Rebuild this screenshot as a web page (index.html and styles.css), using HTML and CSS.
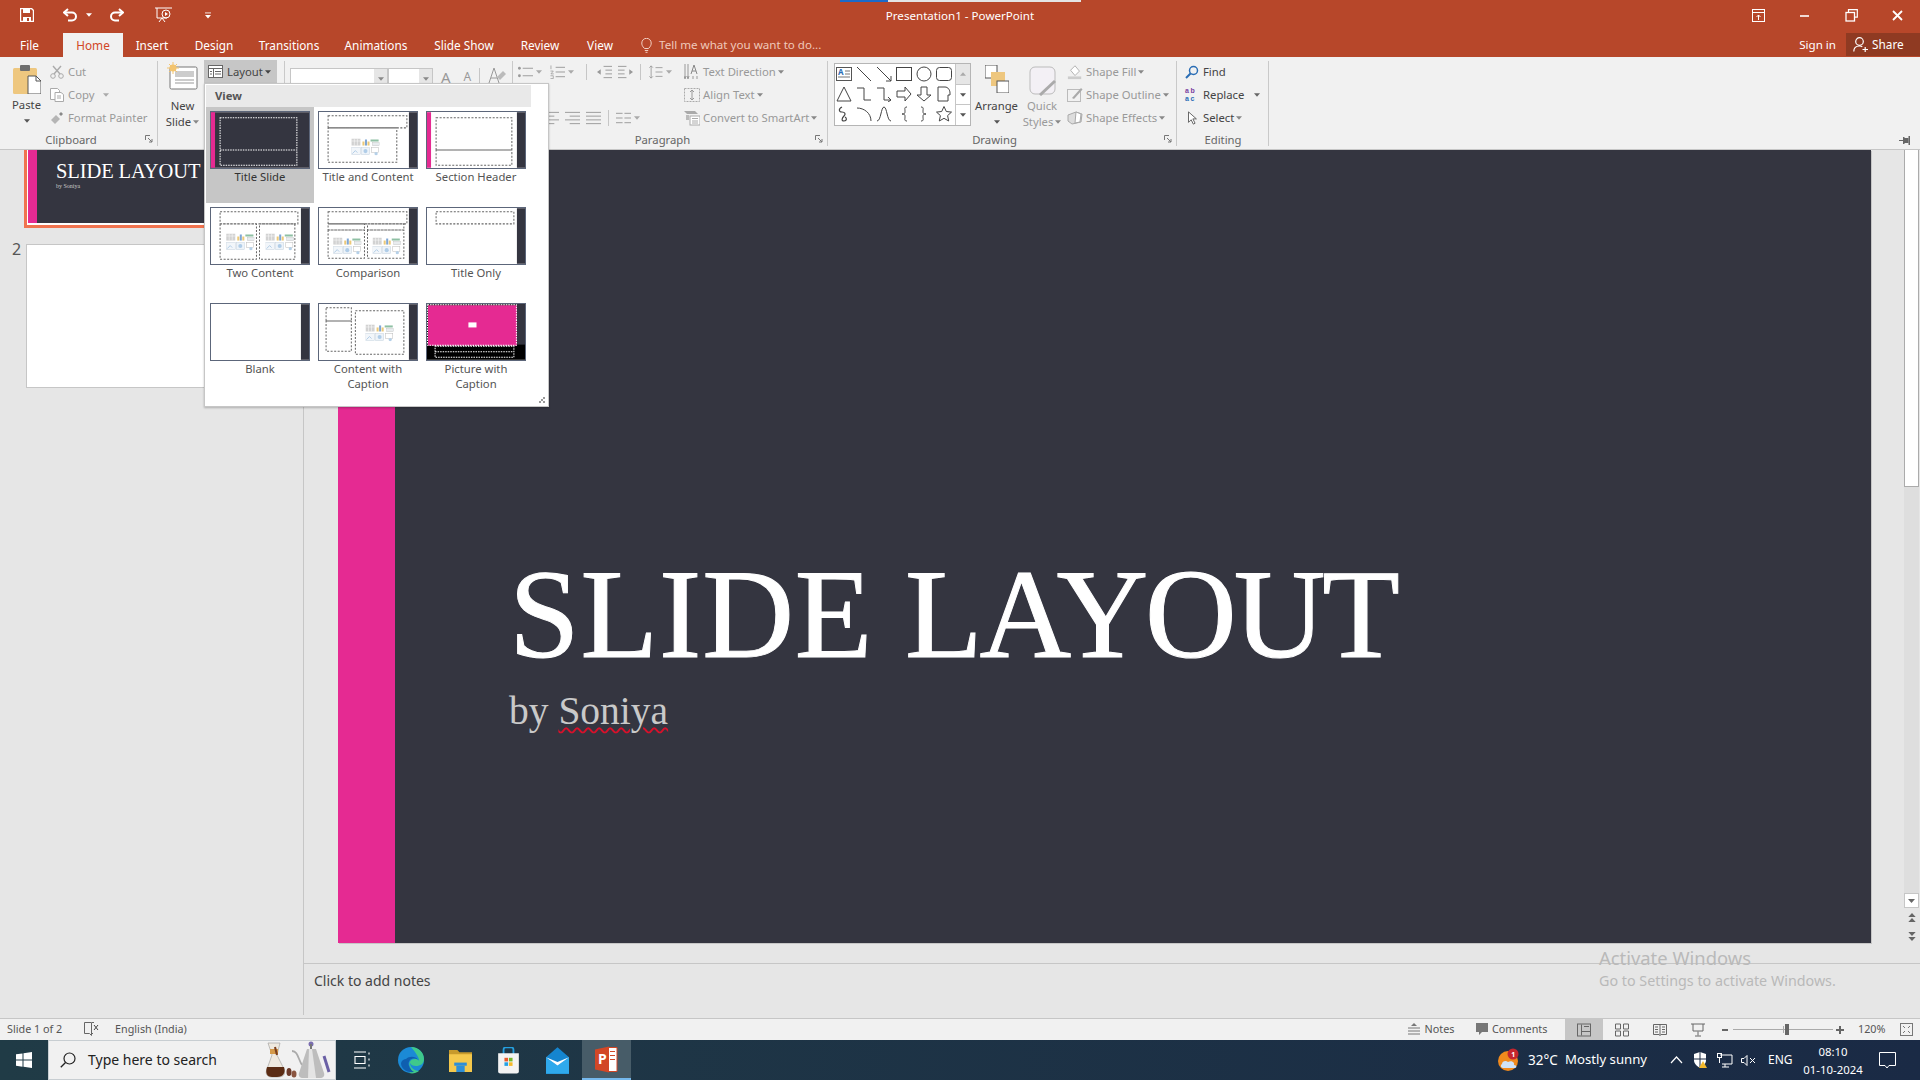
FILE: index.html
```html
<!DOCTYPE html>
<html lang="en">
<head>
<meta charset="utf-8">
<title>Presentation1 - PowerPoint</title>
<link rel="stylesheet" href="styles.css">
</head>
<body>
<svg class="sprite" xmlns="http://www.w3.org/2000/svg">
  <symbol id="ci" viewBox="0 0 28 17">
    <rect x="0" y="0" width="9" height="7" fill="#d2d2d2"/><path d="M0 2.500h9M3 0v7M6 0v7" stroke="#fff" stroke-width=".5"/>
    <rect x="11" y="3" width="2" height="4" fill="#ecc978"/><rect x="13.500" y="1" width="2" height="6" fill="#7fa6d4"/><rect x="16" y="3" width="2" height="4" fill="#ecc978"/>
    <rect x="19" y="1" width="8" height="2" fill="#8fc0a4"/><rect x="21" y="4" width="7" height="3" fill="#e8ecef" stroke="#bbb" stroke-width=".4"/>
    <rect x="0" y="9" width="9" height="7" fill="#f2f6fa" stroke="#c5d2de" stroke-width=".5"/><path d="M1 15l3-3 2 2" stroke="#a3c3e2" fill="none" stroke-width=".8"/>
    <rect x="10" y="9" width="8" height="7" fill="#edf3f9" stroke="#c5d2de" stroke-width=".5"/><circle cx="14" cy="12.500" r="2" fill="#b0cde8"/>
    <rect x="20" y="9" width="7" height="5" fill="#fff" stroke="#bbb" stroke-width=".5"/><circle cx="24.500" cy="15" r="1.600" fill="#b5d0e8"/>
  </symbol>
  <symbol id="caret" viewBox="0 0 7 4"><path d="M0 0h7L3.500 4z" fill="currentColor"/></symbol>
  <symbol id="launch" viewBox="0 0 8 8"><path d="M.5 5V.5H5M3 3l4 4M7 4v3H4" fill="none" stroke="#777"/></symbol>
  <symbol id="lines" viewBox="0 0 16 14"><path d="M0 1h16M0 5h11M0 9h16M0 13h11" stroke="currentColor" fill="none"/></symbol>
  <symbol id="linesr" viewBox="0 0 16 14"><path d="M0 1h16M5 5h11M0 9h16M5 13h11" stroke="currentColor" fill="none"/></symbol>
  <symbol id="linesj" viewBox="0 0 16 14"><path d="M0 1h16M0 5h16M0 9h16M0 13h16" stroke="currentColor" fill="none"/></symbol>
</svg>

<div class="titlebar">
  <div class="progress"><span class="progress-blue"></span><span class="progress-rest"></span></div>
  <div class="qat-row">
    <div class="qat">
      <svg class="q-save" viewBox="0 0 14 14"><path d="M.5.500h11l2 2v11H.5z" fill="none" stroke="#fff" stroke-width="1.400"/><path d="M3 1h7v4H3zM3 9h8v4H3z" fill="#fff"/><rect x="7" y="10" width="2" height="3" fill="#b7472a"/></svg>
      <svg class="q-undo" viewBox="0 0 15 14"><path d="M5 1L1 4.500 5 8" fill="none" stroke="#fff" stroke-width="2"/><path d="M2 4.500h7a4 4 0 0 1 0 8H5" fill="none" stroke="#fff" stroke-width="2"/></svg>
      <svg class="q-caret"><use href="#caret"/></svg>
      <svg class="q-redo" viewBox="0 0 15 14"><path d="M10 1l4 3.500L10 8" fill="none" stroke="#fff" stroke-width="2"/><path d="M13 4.500H6a4 4 0 0 0 0 8h4" fill="none" stroke="#fff" stroke-width="2"/></svg>
      <svg class="q-show" viewBox="0 0 17 16"><path d="M0 1h17M2 1v10h10M4 15l3-4 3 4" fill="none" stroke="#fff"/><circle cx="11" cy="7" r="4" fill="none" stroke="#fff"/><path d="M10 5l3 2-3 2z" fill="#fff"/></svg>
      <svg class="q-more" viewBox="0 0 7 7"><path d="M0 .5h7" stroke="#fff"/><path d="M0 3h7L3.500 7z" fill="#fff"/></svg>
    </div>
    <div class="doc-title">Presentation1 - PowerPoint</div>
    <div class="win">
      <svg class="w-btn" viewBox="0 0 13 13"><rect x=".5" y=".5" width="12" height="12" fill="none" stroke="#fff"/><path d="M0 3.500h13M6.500 11V6M4.500 8l2-2 2 2" stroke="#fff" fill="none"/></svg>
      <svg class="w-btn" viewBox="0 0 13 13"><path d="M2 7h9" stroke="#fff" stroke-width="1.600"/></svg>
      <svg class="w-btn" viewBox="0 0 13 13"><path d="M3.500 3V.7h8.800v7.500H9.500" fill="none" stroke="#fff" stroke-width="1.200"/><rect x="1" y="3.500" width="8.500" height="8.500" fill="none" stroke="#fff" stroke-width="1.300"/></svg>
      <svg class="w-btn" viewBox="0 0 13 13"><path d="M2 2l9 9M11 2l-9 9" stroke="#fff" stroke-width="1.800"/></svg>
    </div>
  </div>
  <div class="tabs-row">
    <div class="tabs">
      <span class="tab">File</span><span class="tab tab-active">Home</span><span class="tab">Insert</span><span class="tab">Design</span><span class="tab">Transitions</span><span class="tab">Animations</span><span class="tab">Slide Show</span><span class="tab">Review</span><span class="tab">View</span>
    </div>
    <div class="tellme">
      <svg class="bulb" viewBox="0 0 11 15"><path d="M3.500 10.500C1 8 .8 6.500.8 5a4.700 4.700 0 0 1 9.400 0c0 1.500-.2 3-2.700 5.500zM3.800 12.500h3.400M4.500 14.300h2" fill="none" stroke="#f3d0c4"/></svg>
      <span>Tell me what you want to do...</span>
    </div>
    <div class="account">
      <span class="signin">Sign in</span>
      <span class="share"><svg class="share-ico" viewBox="0 0 15 15"><circle cx="6.500" cy="4.500" r="3.800" fill="none" stroke="#fff" stroke-width="1.200"/><path d="M.8 14.500c0-3.500 2.500-5.500 5.700-5.500 1 0 2 .2 2.800.7M9.500 12.500h5.500M12.200 10v5" fill="none" stroke="#fff" stroke-width="1.200"/></svg>Share</span>
    </div>
  </div>
</div>

<div class="ribbon">
  <section class="group g-clip">
    <div class="g-body">
      <div class="big b-paste">
        <svg class="i-paste" viewBox="0 0 28 29"><rect x="0" y="3" width="24" height="26" rx="1.500" fill="#eec77f"/><rect x="7" y="0" width="10" height="6" rx="1" fill="#6f6f6f"/><path d="M15 11h8l5 5v13H15z" fill="#fff" stroke="#555"/><path d="M23 11v5h5" fill="none" stroke="#555"/></svg>
        <span class="lbl dark">Paste</span>
        <svg class="caret dark"><use href="#caret"/></svg>
      </div>
      <div class="stack">
        <div class="row dis"><svg class="i14" viewBox="0 0 14 14"><path d="M3 1l7 8M11 1L4 9" stroke="#aaa" stroke-width="1.400"/><circle cx="3" cy="11" r="2.300" fill="none" stroke="#aaa"/><circle cx="11" cy="11" r="2.300" fill="none" stroke="#aaa"/></svg><span>Cut</span></div>
        <div class="row dis"><svg class="i14" viewBox="0 0 14 14"><path d="M.5.500h7l2 2v9H.5z" fill="#fff" stroke="#aaa"/><path d="M5 4.500h6l2.500 2v7H5z" fill="#fff" stroke="#aaa"/><path d="M7 8h4M7 10h4" stroke="#aaa"/></svg><span>Copy</span><svg class="caret gap"><use href="#caret"/></svg></div>
        <div class="row dis"><svg class="i14" viewBox="0 0 14 14"><path d="M1 9l5-5 4 4-5 5z" fill="#b5b5b5"/><path d="M9 3l2-2 2 2-2 2z" fill="#888"/></svg><span>Format Painter</span></div>
      </div>
    </div>
    <div class="g-label lbl-shift">Clipboard<svg class="launch"><use href="#launch"/></svg></div>
  </section>

  <section class="group g-slides">
    <div class="g-body">
      <div class="big b-new">
        <svg class="i-new" viewBox="0 0 31 28"><rect x="3" y="5" width="27" height="22" rx="1.500" fill="#fff" stroke="#777"/><rect x="8" y="9" width="19" height="6" fill="#ccc"/><path d="M8 18h19M8 21h19" stroke="#999"/><circle cx="6" cy="6" r="3.500" fill="#f3c46f"/><path d="M6 0v12M0 6h12M2 2l8 8M10 2l-8 8" stroke="#f3c46f"/></svg>
        <span class="lbl dark">New</span>
        <span class="lbl dark">Slide<svg class="caret inline"><use href="#caret"/></svg></span>
      </div>
      <div class="layout-btn">
        <svg class="i-layout" viewBox="0 0 15 13"><rect x=".5" y=".5" width="14" height="12" fill="#fff" stroke="#666"/><path d="M1 3.500h13M5.500 4v8M7 6.500h6M7 9h6M2 6.500h2M2 9h2" stroke="#666" fill="none"/></svg>
        <span>Layout</span><svg class="caret inline"><use href="#caret"/></svg>
      </div>
    </div>
    <div class="g-label"></div>
  </section>

  <section class="group g-font">
    <div class="g-body font-row">
      <div class="combo c-font"><span class="combo-arrow"><svg class="caret"><use href="#caret"/></svg></span></div>
      <div class="combo c-size"><span class="combo-arrow"><svg class="caret"><use href="#caret"/></svg></span></div>
      <span class="big-a">A</span><span class="small-a">A</span><span class="vsep"></span>
      <svg class="i-clear" viewBox="0 0 18 16"><path d="M6 0L1 15M6 0l5 15M3 10h6" stroke="#999" fill="none"/><path d="M9 9l6-6 3 3-6 6z" fill="#bbb"/></svg>
    </div>
    <div class="g-label"></div>
  </section>

  <section class="group g-para">
    <div class="g-body">
      <div class="para-left">
        <div class="row para-row">
          <span class="pbtn w32"><svg class="i16" viewBox="0 0 16 14"><circle cx="1.500" cy="3" r="1.500" fill="#999"/><circle cx="1.500" cy="11" r="1.500" fill="#999"/><path d="M5 3h11M5 11h11" stroke="#999"/></svg><svg class="caret"><use href="#caret"/></svg></span>
          <span class="pbtn w32"><svg class="i16" viewBox="0 0 16 14"><path d="M6 2h10M6 7h10M6 12h10" stroke="#999"/><path d="M1 0v4M.5 6h3L1 9h3M.5 11h3v3h-3" stroke="#999" fill="none" stroke-width=".8"/></svg><svg class="caret"><use href="#caret"/></svg></span>
          <span class="vsep"></span>
          <span class="pbtn w21"><svg class="i16" viewBox="0 0 16 14"><path d="M7 1h9M9 5h7M9 9h7M7 13h9" stroke="#999"/><path d="M0 7l4-3v6z" fill="#999"/></svg></span>
          <span class="pbtn w21"><svg class="i16" viewBox="0 0 16 14"><path d="M0 1h9M0 5h7M0 9h7M0 13h9" stroke="#999"/><path d="M12 4l4 3-4 3z" fill="#999"/></svg></span>
          <span class="vsep"></span>
          <span class="pbtn w32"><svg class="i16" viewBox="0 0 16 16"><path d="M3 1v14M1 3l2-2 2 2M1 13l2 2 2-2M8 3h8M8 8h8M8 13h8" stroke="#999" fill="none"/></svg><svg class="caret"><use href="#caret"/></svg></span>
        </div>
        <div class="row para-row"></div>
        <div class="row para-row r3">
          <span class="pbtn w21"><svg class="i16 c999"><use href="#lines"/></svg></span>
          <span class="pbtn w21"><svg class="i16 c999"><use href="#linesr"/></svg></span>
          <span class="pbtn w21"><svg class="i16 c999"><use href="#linesj"/></svg></span>
          <span class="vsep"></span>
          <span class="pbtn w32"><svg class="i16" viewBox="0 0 16 14"><path d="M0 2h7M9 2h7M0 7h7M9 7h7M0 12h7M9 12h7" stroke="#999"/></svg><svg class="caret"><use href="#caret"/></svg></span>
        </div>
      </div>
      <div class="stack">
        <div class="row dis"><svg class="i16" viewBox="0 0 16 16"><path d="M1 0v14M4 0v14M0 12l1 3 1-3M3 12l1 3 1-3" stroke="#999" fill="none"/><path d="M7 10l3-9 3 9M8 7h4" stroke="#888" fill="none"/><path d="M9 12v3M13 12v3" stroke="#999"/></svg><span>Text Direction</span><svg class="caret inline"><use href="#caret"/></svg></div>
        <div class="row dis"><svg class="i16" viewBox="0 0 16 16"><rect x=".5" y="1.500" width="15" height="13" fill="none" stroke="#aaa" stroke-dasharray="2 1"/><path d="M8 3v10M6 5l2-2 2 2M6 11l2 2 2-2" stroke="#999" fill="none"/></svg><span>Align Text</span><svg class="caret inline"><use href="#caret"/></svg></div>
        <div class="row dis"><svg class="i16" viewBox="0 0 16 16"><path d="M0 1h11l3 3H3z" fill="#aaa"/><rect x="6" y="6" width="10" height="9" fill="#fff" stroke="#aaa"/><path d="M8 8.500h6M8 11h6M8 13h6" stroke="#aaa"/><rect x="2" y="5" width="3" height="5" fill="#bbb"/></svg><span>Convert to SmartArt</span><svg class="caret inline"><use href="#caret"/></svg></div>
      </div>
    </div>
    <div class="g-label lbl-shift">Paragraph<svg class="launch"><use href="#launch"/></svg></div>
  </section>

  <section class="group g-draw">
    <div class="g-body">
      <div class="gallery">
        <div class="shapes">
          <svg class="sh" viewBox="0 0 16 16"><rect x=".5" y="1.500" width="15" height="13" fill="#fff" stroke="#555"/><path d="M9 5h5M9 8h5M2 11h12" stroke="#777"/><text x="2" y="9" class="sh-a">A</text></svg>
          <svg class="sh" viewBox="0 0 16 16"><path d="M1 1l14 14" stroke="#444"/></svg>
          <svg class="sh" viewBox="0 0 16 16"><path d="M1 1l14 14M15 10v5h-5" stroke="#444" fill="none"/></svg>
          <svg class="sh" viewBox="0 0 16 16"><rect x=".5" y="1.500" width="15" height="13" fill="none" stroke="#444"/></svg>
          <svg class="sh" viewBox="0 0 16 16"><circle cx="8" cy="8" r="7" fill="none" stroke="#444"/></svg>
          <svg class="sh" viewBox="0 0 16 16"><rect x=".5" y="1.500" width="15" height="13" rx="3" fill="none" stroke="#444"/></svg>
          <svg class="sh" viewBox="0 0 16 16"><path d="M8 1l7 14H1z" fill="none" stroke="#444"/></svg>
          <svg class="sh" viewBox="0 0 16 16"><path d="M1 2h7v12h7" fill="none" stroke="#444"/></svg>
          <svg class="sh" viewBox="0 0 16 16"><path d="M1 2h7v12h7M12 11l3 3-3 2" fill="none" stroke="#444"/></svg>
          <svg class="sh" viewBox="0 0 16 16"><path d="M1 5h8V1l6 7-6 7v-4H1z" fill="none" stroke="#444"/></svg>
          <svg class="sh" viewBox="0 0 16 16"><path d="M5 1h6v8h4l-7 6-7-6h4z" fill="none" stroke="#444"/></svg>
          <svg class="sh" viewBox="0 0 16 16"><path d="M2 1h7c3 0 5 3 5 6v2h-2v6H2z" fill="none" stroke="#444"/></svg>
          <svg class="sh" viewBox="0 0 16 16"><path d="M6 1C2 3 3 6 6 6s4 2 2 4-3 5 0 5 3-3 1-4" fill="none" stroke="#444" stroke-width="1.200"/></svg>
          <svg class="sh" viewBox="0 0 16 16"><path d="M1 2c7 0 14 5 14 13" fill="none" stroke="#444"/></svg>
          <svg class="sh" viewBox="0 0 16 16"><path d="M1 15C5 15 5 1 8 1s3 14 7 14" fill="none" stroke="#444"/></svg>
          <svg class="sh" viewBox="0 0 16 16"><path d="M11 1C8 1 9 3 9 5s0 3-3 3c3 0 3 1 3 3s-1 4 2 4" fill="none" stroke="#444"/></svg>
          <svg class="sh" viewBox="0 0 16 16"><path d="M5 1c3 0 2 2 2 4s0 3 3 3c-3 0-3 1-3 3s1 4-2 4" fill="none" stroke="#444"/></svg>
          <svg class="sh" viewBox="0 0 16 16"><path d="M8 .5l2.300 5 5.200.6-3.900 3.500 1.100 5.400L8 12.300 3.300 15l1.100-5.400L.5 6.100l5.200-.6z" fill="none" stroke="#444"/></svg>
        </div>
        <div class="g-scroll">
          <span class="gs gs-up"><svg class="caret up"><use href="#caret"/></svg></span>
          <span class="gs"><svg class="caret dark"><use href="#caret"/></svg></span>
          <span class="gs gs-more"><svg class="caret dark"><use href="#caret"/></svg></span>
        </div>
      </div>
      <div class="big b-arr">
        <svg class="i-arr" viewBox="0 0 24 28"><rect x="0" y="0" width="12" height="13" fill="#fff" stroke="#555"/><rect x="6" y="7" width="14" height="14" fill="#eec77f"/><rect x="12" y="16" width="12" height="12" fill="#fff" stroke="#555"/></svg>
        <span class="lbl dark">Arrange</span>
        <svg class="caret dark"><use href="#caret"/></svg>
      </div>
      <div class="big b-qs">
        <svg class="i-qs" viewBox="0 0 27 30"><rect x="1" y="1" width="25" height="27" rx="5" fill="#f3f0f5" stroke="#bbb"/><path d="M11 29l15-14" stroke="#aaa" stroke-width="3"/></svg>
        <span class="lbl dis-c">Quick</span>
        <span class="lbl dis-c">Styles<svg class="caret inline"><use href="#caret"/></svg></span>
      </div>
      <div class="stack">
        <div class="row dis"><svg class="i16" viewBox="0 0 16 18"><path d="M3 7l5-5 5 6-5 5z" fill="#fff" stroke="#aaa"/><rect x="0" y="14" width="15" height="3" fill="#ccc"/></svg><span>Shape Fill</span><svg class="caret inline"><use href="#caret"/></svg></div>
        <div class="row dis"><svg class="i16" viewBox="0 0 16 16"><rect x=".5" y="2.500" width="13" height="12" fill="none" stroke="#bbb"/><path d="M5 11L14 1l1.500 1.500L7 12z" fill="#aaa"/></svg><span>Shape Outline</span><svg class="caret inline"><use href="#caret"/></svg></div>
        <div class="row dis"><svg class="i16" viewBox="0 0 16 16"><path d="M1 5l8-3 6 2-1 8-9 2-4-3z" fill="#ddd" stroke="#aaa"/><path d="M9 2l5 2-1 8-5 1z" fill="#fff" stroke="#aaa"/></svg><span>Shape Effects</span><svg class="caret inline"><use href="#caret"/></svg></div>
      </div>
    </div>
    <div class="g-label lbl-shift">Drawing<svg class="launch"><use href="#launch"/></svg></div>
  </section>

  <section class="group g-edit">
    <div class="g-body">
      <div class="stack">
        <div class="row dk"><svg class="i14" viewBox="0 0 14 14"><circle cx="8.500" cy="5.500" r="4" fill="none" stroke="#2a6db5" stroke-width="1.500"/><path d="M5.500 8.500L1 13" stroke="#2a6db5" stroke-width="2"/></svg><span>Find</span></div>
        <div class="row dk"><span class="abac"><b class="ab">ab</b><b class="ac">ac</b></span><span>Replace</span><svg class="caret gap2"><use href="#caret"/></svg></div>
        <div class="row dk"><svg class="i14" viewBox="0 0 14 16"><path d="M3 1v12l3-3 2.500 5 2-1L8 9h4z" fill="#fff" stroke="#555"/></svg><span>Select</span><svg class="caret inline"><use href="#caret"/></svg></div>
      </div>
    </div>
    <div class="g-label">Editing</div>
  </section>

  <svg class="pin" viewBox="0 0 11 9"><path d="M0 4.500h4" stroke="#666"/><rect x="4" y="1" width="1.500" height="7" fill="#666"/><rect x="5" y="2" width="4.500" height="5" fill="#666"/><rect x="9.500" y="0" width="1.500" height="9" fill="#666"/></svg>
</div>

<main class="workspace">
  <aside class="panel">
    <div class="thumb-active">
      <div class="mini">
        <span class="mini-pink"></span>
        <div class="mini-text">
          <div class="mini-title">SLIDE LAYOUT</div>
          <div class="mini-sub">by Soniya</div>
        </div>
      </div>
    </div>
    <div class="thumb-row">
      <span class="thumb-num">2</span>
      <div class="thumb-blank"></div>
    </div>
  </aside>

  <div class="editor">
    <div class="stage">
      <article class="slide">
        <span class="slide-pink"></span>
        <div class="slide-text">
          <h1 class="slide-title"><span class="word-a">SLIDE</span> <span class="word-b">LAYOUT</span></h1>
          <p class="slide-sub">by <span class="spell">Soniya</span></p>
        </div>
      </article>
      <div class="vscroll">
        <span class="vs-thumb"></span>
        <span class="vs-track"></span>
        <span class="vs-down"><svg class="caret-lg"><use href="#caret"/></svg></span>
        <svg class="vs-prev" viewBox="0 0 9 11"><path d="M0 5h9L4.500 0zM0 11h9L4.500 6z" fill="#666"/></svg>
        <svg class="vs-next" viewBox="0 0 9 11"><path d="M0 0h9L4.500 5zM0 6h9L4.500 11z" fill="#666"/></svg>
      </div>
    </div>
    <div class="notes">Click to add notes</div>
  </div>
</main>

<div class="watermark">
  <div class="wm-1">Activate Windows</div>
  <div class="wm-2">Go to Settings to activate Windows.</div>
</div>

<footer class="status">
  <div class="st-left">
    <span class="st-slide">Slide 1 of 2</span>
    <svg class="st-spell" viewBox="0 0 15 15"><path d="M6 .5H.5v11h5l2 2v-13zM8 .5h2M8 11.500h1" fill="none" stroke="#666"/><path d="M10 3l4 5M14 3l-4 5" stroke="#444"/></svg>
    <span>English (India)</span>
  </div>
  <div class="st-right">
    <span class="st-notes"><svg class="i12" viewBox="0 0 12 12"><path d="M6 0l3 3H3z" fill="#777"/><path d="M0 5h12M0 8h12M0 11h12" stroke="#777"/></svg>Notes</span>
    <span class="st-comments"><svg class="i12" viewBox="0 0 12 12"><path d="M0 0h12v9H6l-3 3V9H0z" fill="#777"/></svg>Comments</span>
    <span class="vw vw-on"><svg class="i14" viewBox="0 0 14 13"><rect x=".5" y=".5" width="13" height="12" fill="none" stroke="#666"/><path d="M4.500 1v11M5 8h8M7 3h5" stroke="#666" fill="none"/></svg></span>
    <span class="vw"><svg class="i14" viewBox="0 0 14 13"><path d="M.5.500h5v5h-5zM8.500.500h5v5h-5zM.5 7.500h5v5h-5zM8.500 7.500h5v5h-5z" fill="none" stroke="#666"/></svg></span>
    <span class="vw"><svg class="i14" viewBox="0 0 14 13"><path d="M.5 1h13v10H8l-1 1-1-1H.500zM7 1v11M2 3.500h3M2 6h3M2 8.500h3M9 3.500h3M9 6h3M9 8.500h3" fill="none" stroke="#666"/></svg></span>
    <span class="vw"><svg class="i14" viewBox="0 0 14 13"><path d="M0 .5h14M2 .5v7h10v-7M7 8v4M4 12.500h6" fill="none" stroke="#666"/></svg></span>
    <span class="zoom-minus"></span>
    <span class="slider"><span class="slider-mid"></span><span class="slider-thumb"></span></span>
    <span class="zoom-plus"></span>
    <span class="zoom-val">120%</span>
    <svg class="st-fit" viewBox="0 0 13 13"><rect x=".5" y=".5" width="12" height="12" fill="none" stroke="#777"/><path d="M3 3l2 2M10 3L8 5M3 10l2-2M10 10L8 8" stroke="#777"/></svg>
  </div>
</footer>

<nav class="taskbar">
  <span class="tb-start"><svg class="win-logo" viewBox="0 0 16 16"><path d="M0 2.300l6.500-.9v6.200H0zM7.500 1.300L16 0v7.600H7.500zM0 8.500h6.500v6.200L0 13.800zM7.500 8.500H16V16l-8.500-1.200z" fill="#fff"/></svg></span>
  <div class="tb-search">
    <svg class="tb-mag" viewBox="0 0 16 16"><circle cx="9.500" cy="6.500" r="5.500" fill="none" stroke="#222" stroke-width="1.200"/><path d="M5.500 10.500L.8 15.300" stroke="#222" stroke-width="1.300"/></svg>
    <span class="tb-stext">Type here to search</span>
    <svg class="tb-coffee" viewBox="0 0 66 38"><path d="M3 2h12l-3 12 7 14c2 6-1 8-7 8H7c-5 0-7-3-5-8l5-14z" fill="#efe9df" stroke="#999" stroke-width=".6"/><path d="M2 26h17c2 6-1 10-7 10H7C2 36 0 32 2 26z" fill="#5b2c14"/><path d="M5 8h8v5H5z" fill="#d59a4a"/><path d="M10 6l2 8" stroke="#7b3f1d" stroke-width="2"/><ellipse cx="24" cy="31" rx="2.500" ry="4" fill="#6b3a2a"/><ellipse cx="29" cy="33" rx="2.500" ry="3.500" fill="#8a5540"/><path d="M27 10c6 0 6 8 10 14" fill="none" stroke="#aaa" stroke-width="1.800"/><path d="M42 8h9l8 24c1 3-1 5-4 5H38c-3 0-5-2-4-5z" fill="#bdbdbd"/><path d="M44 8h3l4 29h-8z" fill="#e4e4e4"/><circle cx="46" cy="3" r="2.500" fill="#7a6db0"/><path d="M46 3v5" stroke="#777" stroke-width="2"/><path d="M59 15l5 16" stroke="#6a60a5" stroke-width="3"/></svg>
  </div>
  <span class="tb-app tb-first"><svg class="tb-ico" viewBox="0 0 16 17"><path d="M0 .5h12M0 16.500h12M1 5h10v7H1zM15 1v2M15 7v2M15 13v2" fill="none" stroke="#fff" stroke-width="1.100"/></svg></span>
  <span class="tb-app"><svg class="tb-edge" viewBox="0 0 26 28"><circle cx="13" cy="14" r="13" fill="#1b8ad6"/><path d="M13 1c8 0 13 6 13 12 0 5-4 7-8 7-3 0-5-1-6-3 0 4 4 8 9 8-3 2-6 3-10 2 3-1 2-4 1-6-2-5 1-8 5-8 3 0 5 2 4 4 1-5-3-10-8-16z" fill="#3fc98b"/><path d="M8 13c3-3 10-3 12 1-2-2-6-2-8 0-3 3-1 9 4 12-7 1-13-3-13-9 1-3 3-4 5-4z" fill="#0f5fb0"/></svg></span>
  <span class="tb-app"><svg class="tb-ico-lg" viewBox="0 0 22 24"><path d="M0 2h8l2 2h12v4H0z" fill="#c79a2c"/><rect x="0" y="6" width="22" height="17" fill="#f4c84c"/><path d="M7 23v-6h8v6" fill="#2d8fd8"/><path d="M5 14h12v3H5z" fill="#2d8fd8"/></svg></span>
  <span class="tb-app"><svg class="tb-ico-lg" viewBox="0 0 23 30"><path d="M6 8V3c0-1.500 1-2.500 2.500-2.500h6C16 .5 17 1.500 17 3v5" fill="none" stroke="#25a0e0" stroke-width="2"/><path d="M0 7h23v20c0 1.500-1 2.500-2.500 2.500h-18C1 29.500 0 28.500 0 27z" fill="#f3f3f3"/><rect x="7" y="12" width="4" height="4" fill="#e85a2c"/><rect x="12" y="12" width="4" height="4" fill="#74b72a"/><rect x="7" y="17" width="4" height="4" fill="#24a2e6"/><rect x="12" y="17" width="4" height="4" fill="#f4b92a"/></svg></span>
  <span class="tb-app"><svg class="tb-ico-lg" viewBox="0 0 25 29"><path d="M0 11L12.500 0 25 11v18H0z" fill="#1585cf"/><path d="M0 11l12.500 9L25 11v18H0z" fill="#2fa9ec"/><path d="M0 11l12.500 9L25 11 12.500 16z" fill="#fff"/></svg></span>
  <span class="tb-app tb-active"><svg class="tb-ico-lg" viewBox="0 0 23 26"><path d="M13 1h9v24h-9z" fill="#fff" stroke="#d24726"/><path d="M15 5h5M15 9h5M15 13h5" stroke="#d24726"/><path d="M0 3l14-3v26L0 23z" fill="#d24726"/><text x="3" y="17" class="ppt-p">P</text></svg></span>
  <div class="tray">
    <svg class="t-weather" viewBox="0 0 24 24"><circle cx="11" cy="13" r="10" fill="#f08a1d"/><path d="M6 20c-2 0 -3-3-1-4 0-3 4-4 6-2 3-2 7 0 6 3 3 0 3 3 1 3z" fill="#cfe3f8"/><circle cx="16" cy="6" r="5.500" fill="#c4262e"/><text x="14.200" y="9" class="t-badge">1</text></svg>
    <span class="t-temp">32°C</span>
    <span class="t-cond">Mostly sunny</span>
    <svg class="t-chev" viewBox="0 0 13 8"><path d="M1 7l5.500-6L12 7" fill="none" stroke="#fff" stroke-width="1.200"/></svg>
    <svg class="t-shield" viewBox="0 0 15 17"><path d="M7 0l6 2v6c0 4-3 6-6 8-3-2-6-4-6-8V2z" fill="#fff"/><path d="M7 0v16M1 7h12" stroke="#1a2b45"/><path d="M10 9l4 7H6z" fill="#f3b92c"/></svg>
    <svg class="t-net" viewBox="0 0 16 15"><path d="M3 2h12v9H5M8 11v3M5 14h7" fill="none" stroke="#fff"/><rect x=".5" y=".5" width="4" height="4" fill="none" stroke="#fff"/><path d="M2.500 5v5" stroke="#fff"/></svg>
    <svg class="t-spk" viewBox="0 0 15 13"><path d="M.5 4.500h2.500L6 1.500v10l-3-3H.5z" fill="none" stroke="#fff"/><path d="M9 4l5 5M14 4l-5 5" stroke="#fff"/></svg>
    <span class="t-eng">ENG</span>
    <span class="t-clock"><span>08:10</span><span>01-10-2024</span></span>
    <svg class="t-note" viewBox="0 0 17 17"><path d="M.5.500h16v13H10l-2 2.500-2-2.500H.5z" fill="none" stroke="#fff"/></svg>
  </div>
</nav>

<div class="layout-menu">
  <div class="menu-head">View</div>
  <div class="menu-grid">
    <div class="cell cell-on">
      <svg class="tn" viewBox="0 0 97 55"><rect width="97" height="55" fill="#343540"/><rect width="4" height="55" fill="#e52a92"/><path d="M9 5.500h76v32H9zM9 37.500h76v15H9z" class="dash-w"/></svg>
      <span class="cell-lbl">Title Slide</span>
    </div>
    <div class="cell">
      <svg class="tn" viewBox="0 0 97 55"><rect x="89" width="8" height="55" fill="#343540"/><path d="M9 3.500h78v12H9zM9 15.500h68v34H9z" class="dash"/><use href="#ci" x="32" y="26" width="28" height="17"/></svg>
      <span class="cell-lbl">Title and Content</span>
    </div>
    <div class="cell">
      <svg class="tn" viewBox="0 0 97 55"><rect width="4" height="55" fill="#e52a92"/><rect x="89" width="8" height="55" fill="#343540"/><path d="M9 5.500h75v32H9zM9 37.500h75v15H9z" class="dash"/></svg>
      <span class="cell-lbl">Section Header</span>
    </div>
    <div class="cell">
      <svg class="tn" viewBox="0 0 97 55"><rect x="89" width="8" height="55" fill="#343540"/><path d="M9 3.500h77v12H9zM9 15.500h36v35H9zM48 15.500h35v35H48z" class="dash"/><use href="#ci" x="15" y="25" width="28" height="17"/><use href="#ci" x="54" y="25" width="28" height="17"/></svg>
      <span class="cell-lbl">Two Content</span>
    </div>
    <div class="cell">
      <svg class="tn" viewBox="0 0 97 55"><rect x="89" width="8" height="55" fill="#343540"/><path d="M9 3.500h78v12H9zM9 15.500h36v6H9zM48 15.500h36v6H48zM9 21.500h36v28H9zM48 21.500h36v28H48z" class="dash"/><use href="#ci" x="14" y="29" width="28" height="17"/><use href="#ci" x="53" y="29" width="28" height="17"/></svg>
      <span class="cell-lbl">Comparison</span>
    </div>
    <div class="cell">
      <svg class="tn" viewBox="0 0 97 55"><rect x="89" width="8" height="55" fill="#343540"/><path d="M9 3.500h77v12H9z" class="dash"/></svg>
      <span class="cell-lbl">Title Only</span>
    </div>
    <div class="cell">
      <svg class="tn" viewBox="0 0 97 55"><rect x="89" width="8" height="55" fill="#343540"/></svg>
      <span class="cell-lbl">Blank</span>
    </div>
    <div class="cell">
      <svg class="tn" viewBox="0 0 97 55"><rect x="89" width="8" height="55" fill="#343540"/><path d="M7 3.500h25v13H7zM7 16.500h25v30H7zM36 6.500h48v43H36z" class="dash"/><use href="#ci" x="46" y="20" width="28" height="17"/></svg>
      <span class="cell-lbl">Content with<br>Caption</span>
    </div>
    <div class="cell">
      <svg class="tn" viewBox="0 0 97 55"><rect width="97" height="55" fill="#000"/><rect x="89" width="8" height="40" fill="#343540"/><rect x="1" y="1" width="88" height="40" fill="#e52a92"/><path d="M.5.500h88v40H.5zM8 41.500h78v11H8zM8 47h78" class="dash-w"/><rect x="41" y="18" width="8" height="5" fill="#fff"/></svg>
      <span class="cell-lbl">Picture with<br>Caption</span>
    </div>
  </div>
  <svg class="grip" viewBox="0 0 6 6"><path d="M4 0h2v2H4zM2 2h2v2H2zM4 4h2v2H4zM0 4h2v2H0z" fill="#999"/></svg>
</div>
</body>
</html>
```

FILE: styles.css
```css
* { box-sizing: border-box; }
html, body { margin: 0; height: 100%; }
body {
  width: 1920px; height: 1080px; overflow: hidden; position: relative;
  display: flex; flex-direction: column;
  font: 11.3px/1.2 "Noto Sans", sans-serif; color: #444; background: #e6e6e6;
}
svg { display: block; flex: none; }
.sprite { display: none; }

/* title bar */
.titlebar { height: 57px; background: #b7472a; color: #fff; position: relative; flex: none; }
.progress { position: absolute; top: 0; left: 840px; display: flex; height: 2px; }
.progress-blue { width: 48px; background: #1b6ac9; }
.progress-rest { width: 193px; background: #e4e4e4; }
.qat-row { height: 33px; display: flex; align-items: center; position: relative; padding-bottom: 3px; }
.qat { display: flex; align-items: center; padding-left: 20px; width: 400px; }
.q-save { width: 14px; height: 14px; }
.q-undo { width: 15px; height: 14px; margin-left: 29px; }
.q-caret { width: 6px; height: 4px; margin-left: 8px; color: #fff; }
.q-redo { width: 15px; height: 14px; margin-left: 17px; }
.q-show { width: 17px; height: 16px; margin-left: 31px; }
.q-more { width: 6px; height: 7px; margin-left: 33px; }
.doc-title { position: absolute; left: 0; right: 0; top: 9px; text-align: center; font-size: 11.6px; }
.win { margin-left: auto; display: flex; padding-right: 16px; gap: 33.500px; position: relative; }
.w-btn { width: 13px; height: 13px; }
.tabs-row { height: 24px; display: flex; align-items: stretch; }
.tabs { display: grid; grid-template-columns: 59px 4px 60px 58px 66px 84px 90px 86px 66px 54px; font-size: 11.8px; }
.tab { display: flex; align-items: center; justify-content: center; }
.tab:first-child { grid-column: 1; }
.tab-active { grid-column: 3; background: #f1f1f1; color: #d24726; }
.tellme { display: flex; align-items: center; gap: 7px; margin-left: 14px; color: #f0c9bb; font-size: 11.6px; }
.bulb { width: 11px; height: 15px; }
.account { margin-left: auto; display: flex; align-items: center; }
.signin { font-size: 11.6px; margin-right: 10px; }
.share { width: 74px; height: 23px; background: #8f3a22; display: flex; align-items: center; gap: 4px; padding-left: 7px; font-size: 11.8px; margin-top: -1px; }
.share-ico { width: 15px; height: 15px; }

/* ribbon */
.ribbon { height: 93px; background: #f1f1f1; border-bottom: 1px solid #c6c6c6; display: flex; padding-top: 3px; position: relative; flex: none; }
.group { display: flex; flex-direction: column; height: 86px; position: relative; }
.group::after { content: ""; position: absolute; right: 0; top: 1px; bottom: 0; width: 1px; background: #c9c9c9; }
.g-clip { width: 158px; }
.g-slides { width: 127px; }
.g-font { width: 228px; }
.g-para { width: 315px; }
.g-draw { width: 349px; }
.g-edit { width: 92px; }
.g-body { height: 73px; display: flex; }
.g-label { height: 13px; display: flex; justify-content: center; align-items: center; color: #666; position: relative; line-height: 13px; margin-top: 3px; }
.lbl-shift { padding-right: 16px; }
.launch { width: 8px; height: 8px; position: absolute; right: 5px; top: 2px; }
.big { display: flex; flex-direction: column; align-items: center; }
.lbl { line-height: 16px; white-space: nowrap; display: flex; align-items: center; }
.dark { color: #444; }
.dis-c { color: #9a9a9a; }
.caret { width: 6px; height: 4px; color: #888; }
.caret.dark { color: #555; margin-top: 6px; }
.caret.inline { margin-left: 2px; color: #888; }
.caret.up { transform: rotate(180deg); color: #aaa; }
.caret.gap { margin-left: 9px; color: #aaa; }
.caret.gap2 { margin-left: 10px; color: #666; }
.stack { display: flex; flex-direction: column; }
.row { height: 23.200px; display: flex; align-items: center; white-space: nowrap; }
.dis { color: #999; }
.dk { color: #444; }
.i14 { width: 14px; height: 14px; }
.i16 { width: 16px; height: 16px; }
.i12 { width: 12px; height: 12px; }
.c999 { color: #999; }
.row .i14 { margin-right: 4px; }
.row.dis > .i16 { margin-right: 3px; }

.g-clip .g-body { padding-left: 7px; }
.b-paste { width: 39px; padding-top: 5px; margin-right: 4px; }
.i-paste { width: 28px; height: 29px; margin-bottom: 3px; }
.g-slides .g-body { padding-left: 3px; }
.b-new { width: 43px; padding-top: 2px; }
.i-new { width: 31px; height: 28px; margin-bottom: 8px; }
.layout-btn { width: 73px; height: 23px; background: #c6c6c6; display: flex; align-items: center; padding-left: 4px; gap: 4px; color: #444; }
.i-layout { width: 15px; height: 13px; }
.layout-btn .caret.inline { margin-left: -2px; color: #444; }
.font-row { padding: 8px 0 0 5px; align-items: flex-start; }
.combo { height: 22px; background: #fff; border: 1px solid #c6c6c6; display: flex; justify-content: flex-end; }
.c-font { width: 98px; }
.c-size { width: 45px; }
.combo-arrow { width: 13px; background: #e6e6e6; display: flex; align-items: center; justify-content: center; }
.big-a { font-size: 15px; color: #999; margin-left: 8px; line-height: 18px; }
.small-a { font-size: 12px; color: #999; margin-left: 13px; line-height: 18px; }
.vsep { width: 1px; height: 16px; background: #c6c6c6; flex: none; }
.font-row .vsep { margin: 0 8px; }
.i-clear { width: 18px; height: 16px; }
.g-para .g-body { padding-left: 8px; }
.para-left { width: 166px; margin-left: -3px; display: flex; flex-direction: column; }
.para-row .vsep { margin: 0 7px 0 4px; }
.para-row.r3 { padding-left: 23px; }
.pbtn { display: flex; align-items: center; gap: 3px; height: 20px; flex: none; }
.w32 { width: 32px; }
.w21 { width: 21px; justify-content: center; }
.pbtn .i16 { width: 15px; height: 14px; }
.pbtn .caret { color: #aaa; }
.g-draw .g-body { padding-left: 6px; }
.gallery { width: 137px; height: 63px; margin-top: 3px; background: #fff; border: 1px solid #b5b5b5; display: flex; flex: none; }
.shapes { width: 121px; display: grid; grid-template-columns: repeat(6, 20px); grid-template-rows: repeat(3, 20px); margin-left: -1px; }
.sh { width: 16px; height: 16px; margin: auto; }
.sh-a { font: bold 8px "Noto Sans", sans-serif; fill: #2a6db5; }
.g-scroll { width: 15px; display: flex; flex-direction: column; border-left: 1px solid #c6c6c6; }
.gs { flex: 1; display: flex; align-items: center; justify-content: center; border-bottom: 1px solid #c6c6c6; }
.gs .caret.dark { margin: 0; }
.gs-up { background: #e6e6e6; }
.gs-more { border-bottom: 0; }
.b-arr { width: 49px; padding-top: 5px; margin-left: 1px; }
.i-arr { width: 24px; height: 28px; margin-bottom: 5px; }
.b-qs { width: 42px; padding-top: 6px; margin-right: 4px; }
.i-qs { width: 27px; height: 30px; margin-bottom: 2px; }
.g-edit .g-body { padding-left: 8px; }
.abac { width: 14px; margin-right: 4px; display: flex; flex-direction: column; font: 700 7px/8.200px "Liberation Sans", sans-serif; letter-spacing: 1.500px; }
.ab { color: #7a3fa0; }
.ac { color: #2a6db5; }
.pin { width: 11px; height: 9px; position: absolute; right: 10px; bottom: 4px; }

/* workspace */
.workspace { flex: 1; display: flex; min-height: 0; }
.panel { width: 304px; border-right: 1px solid #c6c6c6; margin-bottom: 3px; flex: none; overflow: hidden; }
.thumb-active { margin-left: 24px; width: 260px; height: 78px; border: solid #f0734f; border-width: 0 3px 3px; background: #fff; padding: 0 1px 2px; }
.mini { height: 100%; background: #343540; display: flex; }
.mini-pink { width: 9px; background: #e52a92; }
.mini-text { padding: 10px 0 0 19px; font-family: "Liberation Serif", serif; color: #fff; }
.mini-title { font-size: 20.500px; line-height: 22px; white-space: nowrap; letter-spacing: -.1px; }
.mini-sub { font-size: 6px; line-height: 8px; margin-top: 0; color: #ccc; }
.thumb-row { display: flex; margin-top: 16px; }
.thumb-num { width: 26px; font-size: 16px; color: #555; padding-left: 12px; line-height: 20px; margin-top: -5px; }
.thumb-blank { width: 262px; height: 144px; background: #fff; border: 1px solid #c6c6c6; }
.editor { flex: 1; display: flex; flex-direction: column; min-width: 0; }
.stage { height: 814px; border-bottom: 1px solid #c6c6c6; display: flex; padding-left: 34px; }
.slide { width: 1533px; height: 793px; background: #343540; display: flex; box-shadow: 1px 1px 0 #c6c6c6; color: #fff; font-family: "Liberation Serif", serif; }
.slide-pink { width: 57px; background: #e52a92; }
.slide-text { padding: 401px 0 0 114px; }
.slide-title { margin: 0; font-size: 127px; line-height: 127px; font-weight: 400; white-space: nowrap; -webkit-text-stroke: 1px #fff; }
.word-a { letter-spacing: .9px; }
.word-b { letter-spacing: -3.100px; }
.slide-sub { margin: 12.500px 0 0; font-size: 39.500px; line-height: 40px; color: #c9c9c9; }
.spell { text-decoration: underline wavy #d8102a 1.500px; text-underline-offset: 3px; }
.vscroll { width: 15px; margin-left: 33px; display: flex; flex-direction: column; align-items: center; }
.vs-thumb { width: 15px; height: 337px; background: #fff; border: solid #ababab; border-width: 0 1px 1px; }
.vs-track { width: 15px; height: 406px; background: #dedede; }
.vs-down { width: 15px; height: 15px; background: #fff; border: 1px solid #c6c6c6; display: flex; align-items: center; justify-content: center; color: #666; }
.caret-lg { width: 7px; height: 4px; }
.vs-prev { width: 8px; height: 9px; margin-top: 5px; }
.vs-next { width: 8px; height: 9px; margin-top: 10px; }
.notes { padding: 8px 0 0 10px; font-size: 14px; line-height: 18px; color: #444; }
.watermark { position: absolute; left: 1599px; top: 946px; color: #b9b9b9; pointer-events: none; }
.wm-1 { font-size: 18.400px; line-height: 24px; }
.wm-2 { font-size: 14.300px; line-height: 20px; margin-top: 1px; }

/* status bar */
.status { height: 22px; background: #f1f1f1; border-top: 1px solid #c6c6c6; display: flex; align-items: stretch; color: #555; flex: none; font-size: 10.800px; }
.st-left { display: flex; align-items: center; padding: 0 0 1px 7px; }
.st-slide { width: 77px; }
.st-spell { width: 15px; height: 15px; margin-right: 16px; }
.st-right { margin-left: auto; display: flex; align-items: center; height: 100%; }
.st-notes { display: flex; align-items: center; gap: 5px; width: 68.400px; padding-bottom: 1px; }
.st-comments { display: flex; align-items: center; gap: 4px; width: 89px; padding-bottom: 1px; }
.vw { width: 38px; height: 100%; display: flex; align-items: center; justify-content: center; }
.vw-on { background: #c6c6c6; }
.zoom-minus { width: 6px; height: 2px; background: #666; margin: 0 5px 0 4.500px; }
.slider { width: 100px; height: 1px; background: #aaa; position: relative; display: block; }
.slider-mid { position: absolute; left: 50px; top: -3px; width: 1px; height: 7px; background: #aaa; }
.slider-thumb { position: absolute; left: 52px; top: -5px; width: 4px; height: 11px; background: #666; }
.zoom-plus { width: 8px; height: 8px; margin: 0 14.500px 0 3px; background: linear-gradient(#666,#666) center/8px 2px no-repeat, linear-gradient(#666,#666) center/2px 8px no-repeat; }
.zoom-val { width: 42px; }
.st-fit { width: 13px; height: 13px; margin-right: 7px; }

/* taskbar */
.taskbar { height: 40px; background: linear-gradient(90deg, #203b46, #1a2a45); display: flex; align-items: stretch; color: #fff; flex: none; }
.tb-start { width: 48px; display: flex; align-items: center; padding-left: 16px; }
.win-logo { width: 16px; height: 16px; }
.tb-search { width: 288px; background: #f1f1f1; border: 1px solid #c8ced2; color: #222; display: flex; align-items: center; padding-left: 11px; }
.tb-mag { width: 16px; height: 16px; }
.tb-stext { font-size: 14px; margin-left: 12px; width: 177px; }
.tb-coffee { width: 66px; height: 38px; }
.tb-app { width: 48.800px; display: flex; align-items: center; justify-content: center; }
.tb-first { width: 51px; }
.tb-ico { width: 16px; height: 20px; }
.tb-edge { width: 26px; height: 28px; }
.tb-ico-lg { width: 23px; height: 27px; }
.tb-active { background: #475c68; border-bottom: 2px solid #76b9ed; }
.ppt-p { font: 700 14px "Noto Sans", sans-serif; fill: #fff; }
.tray { margin-left: auto; display: flex; align-items: center; height: 100%; font-size: 13.500px; }
.t-weather { width: 24px; height: 24px; margin-right: 7px; }
.t-badge { font: 700 7px "Noto Sans", sans-serif; fill: #fff; }
.t-temp { width: 37px; white-space: nowrap; }
.t-cond { width: 105px; white-space: nowrap; font-size: 13.200px; }
.t-chev { width: 13px; height: 8px; margin-right: 10px; }
.t-shield { width: 15px; height: 17px; margin-right: 9px; }
.t-net { width: 16px; height: 15px; margin-right: 8px; }
.t-spk { width: 15px; height: 13px; margin-right: 12px; }
.t-eng { width: 35px; font-size: 12px; }
.t-clock { width: 60px; display: flex; flex-direction: column; align-items: center; gap: 3px; font-size: 11.400px; line-height: 15px; margin-right: 16px; white-space: nowrap; }
.t-note { width: 17px; height: 17px; margin-right: 24px; }

/* layout gallery menu */
.layout-menu { position: absolute; left: 204px; top: 83px; width: 345px; height: 324px; background: #fff; border: 1px solid #c6c6c6; box-shadow: 0 1px 2px rgba(0,0,0,.25); padding: 1px 0 0 1px; }
.menu-head { width: 325px; height: 22px; background: #e9e9e9; font-weight: 700; color: #555; padding-left: 9px; line-height: 22px; }
.menu-grid { display: grid; grid-template-columns: repeat(3, 108px); grid-auto-rows: 96px; }
.cell { padding: 4px 4px 0; text-align: center; color: #555; line-height: 15px; }
.cell-on { background: #c6c6c6; color: #333; }
.tn { width: 100px; height: 58px; background: #fff; border: 1.500px solid #5c667a; box-shadow: inset 0 0 0 1px #fff; }
.cell-lbl { display: block; }
.dash { fill: none; stroke: #666; stroke-width: 1; stroke-dasharray: 2 1.500; }
.dash-w { fill: none; stroke: #fff; stroke-width: 1; stroke-dasharray: 1.500 1; }
.grip { width: 6px; height: 6px; position: absolute; right: 3px; bottom: 3px; }
```
